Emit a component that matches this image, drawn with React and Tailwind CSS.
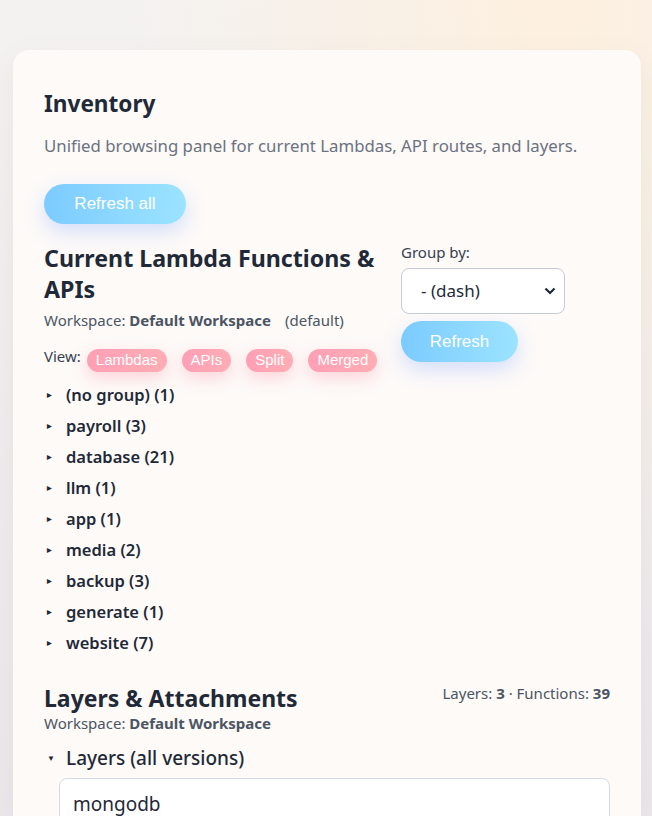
import React from "react";

const groups = [
  ["(no group)", 1],
  ["payroll", 3],
  ["database", 21],
  ["llm", 1],
  ["app", 1],
  ["media", 2],
  ["backup", 3],
  ["generate", 1],
  ["website", 7],
];

const views = ["Lambdas", "APIs", "Split", "Merged"];

function Pill({ children }) {
  return (
    <span className="rounded-full bg-gradient-to-r from-[#ff9fb6] to-[#ffadb4] px-[9px] h-[23px] flex items-center text-[15px] text-white font-['Liberation_Sans',sans-serif] shadow-[0_6px_16px_rgba(255,140,160,0.35)]">
      {children}
    </span>
  );
}

function BlueButton({ children, className = "" }) {
  return (
    <button
      className={`rounded-full bg-gradient-to-r from-[#7ccbff] to-[#9be3ff] text-white text-[17px] font-['Liberation_Sans',sans-serif] shadow-[0_8px_20px_rgba(120,160,255,0.3)] ${className}`}
    >
      {children}
    </button>
  );
}

export default function App() {
  return (
    <div className="min-h-[816px] bg-[radial-gradient(ellipse_at_85%_0%,#fdf0df_0%,rgba(253,240,223,0)_55%),linear-gradient(180deg,#f4f2f1,#ebe8ec)] pl-[13px] pr-[11px] pt-[50px] font-['Segoe_UI','Noto_Sans',sans-serif] text-[#1f2937] overflow-hidden">
      <div className="rounded-t-[16px] bg-[#fdfaf8] px-[31px] pt-[38px] pb-[40px] shadow-[0_10px_30px_rgba(120,100,90,0.08)] h-[766px] overflow-hidden">
        <h1 className="text-[22.6px] font-bold leading-[32px]">Inventory</h1>
        <p className="mt-[14px] text-[16.8px] leading-[24px] text-[#6b7280]">
          Unified browsing panel for current Lambdas, API routes, and layers.
        </p>
        <BlueButton className="mt-[26px] h-[40px] w-[142px]">Refresh all</BlueButton>

        <div className="mt-[16px] flex gap-[20px]">
          <div className="w-[337px]">
            <h2 className="mt-[3px] text-[23.2px] font-bold leading-[31px]">Current Lambda Functions &amp; APIs</h2>
            <div className="mt-[4px] text-[15px] leading-[22px] text-[#4b5563]">
              Workspace: <b>Default Workspace</b>
              <span className="ml-[14px]">(default)</span>
            </div>
            <div className="mt-[18px] flex items-center gap-[15px] text-[15px] text-[#374151]">
              <span className="-mr-[9px] -mt-[8px]">View:</span>
              {views.map((v) => (
                <Pill key={v}>{v}</Pill>
              ))}
            </div>
            <ul className="mt-[8px] flex flex-col">
              {groups.map(([name, n]) => (
                <li key={name} className="flex items-center h-[31px] text-[16.5px] font-semibold">
                  <span className="w-[22px] pl-[3px] text-[6px] text-[#1f2937]">▶</span>
                  {name} ({n})
                </li>
              ))}
            </ul>
          </div>
          <div className="pt-[2px]">
            <div className="text-[15px] leading-[20px] text-[#374151]">Group by:</div>
            <div className="relative mt-[6px] w-[164px]">
              <select className="h-[46px] w-full appearance-none rounded-[8px] border border-[#c5cbd8] bg-white pl-[19px] text-[17px] text-[#1f2937]">
                <option>- (dash)</option>
              </select>
              <svg className="pointer-events-none absolute right-[9px] top-[19px]" width="12" height="8" viewBox="0 0 12 8">
                <path d="M1.5 1.5 L6 6 L10.5 1.5" fill="none" stroke="#1f2937" strokeWidth="2.2" />
              </svg>
            </div>
            <BlueButton className="mt-[7px] h-[41px] w-[117px]">Refresh</BlueButton>
          </div>
        </div>

        <div className="mt-[24px] flex items-start justify-between">
          <div>
            <h2 className="text-[23px] font-bold leading-[30px]">Layers &amp; Attachments</h2>
            <div className="text-[15px] leading-[20px] text-[#4b5563]">
              Workspace: <b>Default Workspace</b>
            </div>
          </div>
          <div className="text-[15px] leading-[20px] text-[#4b5563]">
            Layers: <b>3</b> · Functions: <b>39</b>
          </div>
        </div>
        <div className="mt-[11px] flex items-center text-[19px] font-medium">
          <span className="w-[22px] pl-[3px] text-[8px]">▼</span>
          Layers (all versions)
        </div>
        <div className="ml-[15px] mt-[5px] rounded-[8px] border border-[#d5dae2] bg-white px-[13px] pt-[11px] pb-[12px] text-[19px]">
          mongodb
        </div>
      </div>
    </div>
  );
}
